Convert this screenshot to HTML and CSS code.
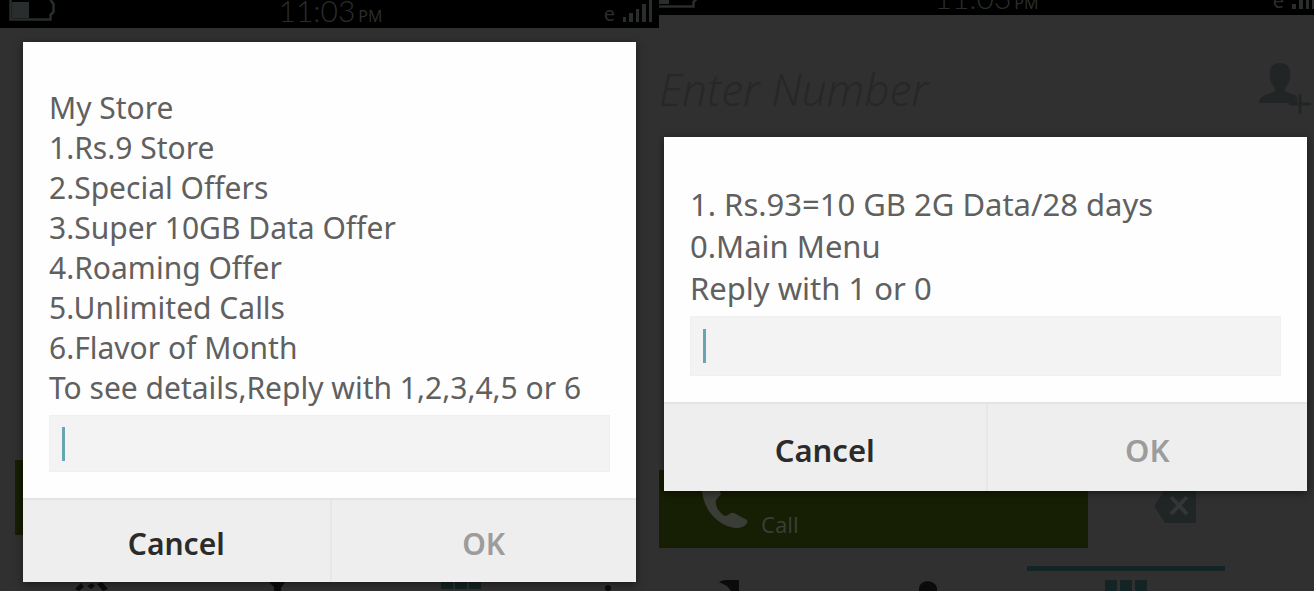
FILE: index.html
```
<!DOCTYPE html>
<html lang="en">
  <head>
    <meta charset="UTF-8" />
    <meta name="viewport" content="width=device-width, initial-scale=1.0" />
    <title>USSD Data Offer</title>
    <link rel="stylesheet" href="styles.css">
  </head>
  <body>
    <div class="screens">
      <!-- Store menu -->
      <section class="phone phone-store">
        <header class="status">
          <svg class="battery" width="48" height="22" viewBox="0 0 48 22">
            <path d="M2.500 0V19.500H42.500V15L45.500 12V4L42.500 0" fill="none" stroke="currentColor" stroke-width="2.500" />
            <rect x="4" y="2" width="17" height="16" fill="currentColor" />
          </svg>
          <div class="clock">11:03<small>PM</small></div>
          <div class="network">
            <span>e</span>
            <svg width="30" height="22" viewBox="0 0 30 22" fill="currentColor">
              <path d="M0 17h3v5H0zM6 13h4v9H6zM13 9h3v13h-3zM19 4h4v18h-4zM26 0h3v22h-3z" />
            </svg>
          </div>
        </header>
        <div class="call-row">
          <div class="call"></div>
        </div>
        <nav class="tabs">
          <svg width="36" height="12" viewBox="0 0 36 12"><path d="M1 8l6-6 3 4-5 4zM13 5l5-3 3 3-4 3zM23 3l5-2 6 7-5 2z" fill="currentColor" /></svg>
          <svg width="36" height="12" viewBox="0 0 36 12"><path d="M10 1h16l-4 6v5h-7V6z" fill="currentColor" /></svg>
          <svg class="active" width="42" height="12" viewBox="0 0 42 12"><path d="M1 0h12v8H1zM15 0h12v8H15zM29 0h12v8H29z" fill="currentColor" /></svg>
          <svg width="36" height="12" viewBox="0 0 36 12"><circle cx="20" cy="7" r="3" fill="currentColor" /></svg>
        </nav>

        <form class="dialog">
          <div class="dialog-body">
            <label for="store-reply">
              My Store<br>
              1.Rs.9 Store<br>
              2.Special Offers<br>
              3.Super 10GB Data Offer<br>
              4.Roaming Offer<br>
              5.Unlimited Calls<br>
              6.Flavor of Month<br>
              To see details,Reply with 1,2,3,4,5 or 6
            </label>
            <input type="text" id="store-reply" class="reply" />
          </div>
          <div class="dialog-actions">
            <button type="button">Cancel</button>
            <button type="submit" disabled>OK</button>
          </div>
        </form>
      </section>

      <!-- Offer details -->
      <section class="phone phone-offer">
        <header class="status">
          <svg class="battery" width="48" height="22" viewBox="0 0 48 22">
            <path d="M0 19.500H34.500V15L37.500 12V4" fill="none" stroke="currentColor" stroke-width="2.500" />
            <rect x="0" y="0" width="10" height="17" fill="currentColor" />
          </svg>
          <div class="clock">11:03<small>PM</small></div>
          <div class="network">
            <span>e</span>
            <svg width="22" height="22" viewBox="0 0 22 22" fill="currentColor">
              <path d="M0 17h4v5H0zM7 13h4v9H7zM14 9h3v13h-3zM20 4h4v18h-4z" />
            </svg>
          </div>
        </header>
        <div class="number-row">
          <span class="number">Enter Number</span>
          <svg width="56" height="54" viewBox="0 0 56 54">
            <path d="M22 1c8 0 11 5 10 12 0 7-3 11-5 13v3c4 3 9 2 12 6v6H1c0-8 10-8 16-12v-3c-3-3-5-7-5-13C11 6 14 1 22 1z" fill="currentColor" />
            <path d="M42 32v20M31 42h22" stroke="currentColor" stroke-width="3" />
          </svg>
        </div>
        <div class="call-row">
          <div class="call">
            <svg width="50" height="60" viewBox="0 0 50 60">
              <path d="M4 0C-1 22 12 46 36 50c6 1 14-3 12-8l-13-7c-4-1-6 3-9 3C20 35 16 28 17 22l5-6L15 0z" fill="currentColor" />
            </svg>
            <span>Call</span>
          </div>
          <svg class="erase" width="44" height="34" viewBox="0 0 44 34">
            <path d="M12 0h31v33H12L1 16z" fill="currentColor" />
            <path d="M18 7l16 17M34 7L18 24" stroke="#353636" stroke-width="4" />
          </svg>
        </div>
        <nav class="tabs">
          <svg width="36" height="12" viewBox="0 0 36 12"><path d="M7 2c4-3 13-2 20-2v12h-7l-5-6z" fill="currentColor" /></svg>
          <svg width="36" height="12" viewBox="0 0 36 12"><path d="M9 12V8c1-9 16-9 18 0v4z" fill="currentColor" /></svg>
          <span class="active">
            <svg width="42" height="12" viewBox="0 0 42 12"><path d="M0 1h12v11H0zM15 1h12v11H15zM30 1h12v11H30z" fill="currentColor" /></svg>
          </span>
        </nav>

        <form class="dialog">
          <div class="dialog-body">
            <label for="offer-reply">
              1. Rs.93=10 GB 2G Data/28 days<br>
              0.Main Menu<br>
              Reply with 1 or 0
            </label>
            <input type="text" id="offer-reply" class="reply" />
          </div>
          <div class="dialog-actions">
            <button type="button">Cancel</button>
            <button type="submit" disabled>OK</button>
          </div>
        </form>
      </section>
    </div>
  </body>
</html>
```

FILE: styles.css
```
* {
  box-sizing: border-box;
}
body {
  margin: 0;
  font-family: "Noto Sans", "Open Sans", sans-serif;
  background: #303030;
}
.screens {
  display: grid;
  grid-template-columns: 659fr 655fr;
  min-height: 100vh;
}
.phone {
  position: relative;
  display: flex;
  flex-direction: column;
  overflow: hidden;
  background: #303030;
}
svg {
  display: block;
}

/* status bar */
.status {
  display: grid;
  grid-template-columns: 1fr auto 1fr;
  align-items: end;
  align-content: end;
  height: 28px;
  padding: 0 6px 6px 8px;
  overflow: hidden;
  background: #000;
  color: #292d2d;
}
.clock {
  display: flex;
  align-items: baseline;
  gap: 3px;
  font-family: Lato, sans-serif;
  font-size: 30px;
  font-weight: 300;
  line-height: 20px;
}
.clock small {
  font-family: "Noto Sans", sans-serif;
  font-size: 16px;
  font-weight: 400;
  line-height: 12px;
}
.network {
  display: flex;
  align-items: end;
  justify-content: flex-end;
  gap: 8px;
  font-size: 20px;
  line-height: 16px;
}

/* dialer */
.number-row {
  display: flex;
  align-items: center;
  justify-content: space-between;
  height: 148px;
  color: #272727;
}
.number {
  font-size: 44px;
  font-style: italic;
  font-weight: 300;
}
.number-row svg {
  color: #222525;
}
.call-row {
  display: flex;
  margin-top: auto;
}
.call {
  display: flex;
  align-items: flex-end;
  background: #161e03;
  color: #393d36;
  font-size: 22px;
  line-height: 28px;
}
.erase {
  color: #202626;
}
.tabs {
  display: grid;
  color: #0b0b0b;
}
.tabs .active {
  color: #142323;
}

/* dialog */
.dialog {
  position: absolute;
  background: #fefefe;
  box-shadow: 0 2px 8px rgba(0, 0, 0, 0.5);
}
.dialog-body {
  padding: 46px 26px 26px;
}
.dialog-body label {
  display: block;
  color: #606060;
  font-size: 30px;
  line-height: 40px;
  white-space: nowrap;
}
.reply {
  display: block;
  width: 100%;
  height: 57px;
  margin-top: 7px;
  padding: 0 20px;
  border: 1px solid #f0f0f0;
  outline: none;
  background: linear-gradient(#69a5b0, #69a5b0) 12px center / 3px 34px no-repeat #f3f3f3;
  caret-color: #69a5b0;
  font: inherit;
  font-size: 28px;
}
.dialog-actions {
  display: grid;
  grid-template-columns: 1fr 1fr;
  border-top: 2px solid #e4e4e4;
  background: #eee;
}
.dialog-actions button {
  height: 82px;
  padding: 4px 0 0;
  border: 0;
  background: none;
  color: #2b2b2b;
  font-family: inherit;
  font-size: 30px;
  font-weight: 600;
}
.dialog-actions button:disabled {
  border-left: 2px solid #e7e7e7;
  color: #9c9c9c;
}

/* store menu screen */
.phone-store .dialog {
  top: 42px;
  left: 23px;
  right: 23px;
}
.phone-store .call-row {
  padding: 0 30px 0 15px;
}
.phone-store .call {
  width: 65%;
  height: 75px;
}
.phone-store .tabs {
  grid-template-columns: 28% 28% 28% 16%;
  height: 56px;
  padding-top: 46px;
  justify-items: center;
}

/* offer details screen */
.phone-offer .status {
  height: 15px;
  padding: 0 0 6px;
}
.phone-offer .dialog {
  top: 137px;
  left: 5px;
  right: 7px;
}
.phone-offer .dialog-body label {
  font-size: 31px;
  line-height: 42px;
}
.phone-offer .reply {
  height: 60px;
}
.phone-offer .dialog-actions button {
  height: 87px;
  padding-top: 4px;
  font-size: 31px;
}
.phone-offer .call {
  gap: 12px;
  flex: 0 0 429px;
  height: 78px;
  padding: 0 0 10px 40px;
}
.phone-offer .erase {
  margin: 20px 0 0 65px;
}
.phone-offer .tabs {
  grid-template-columns: repeat(3, 29%);
  height: 43px;
  margin-left: -28px;
  padding-top: 18px;
  justify-items: center;
}
.phone-offer .tabs > svg {
  margin-top: 14px;
}
.phone-offer .tabs .active {
  display: flex;
  justify-content: center;
  width: 100%;
  padding-top: 8px;
  border-top: 5px solid #142323;
}
```
